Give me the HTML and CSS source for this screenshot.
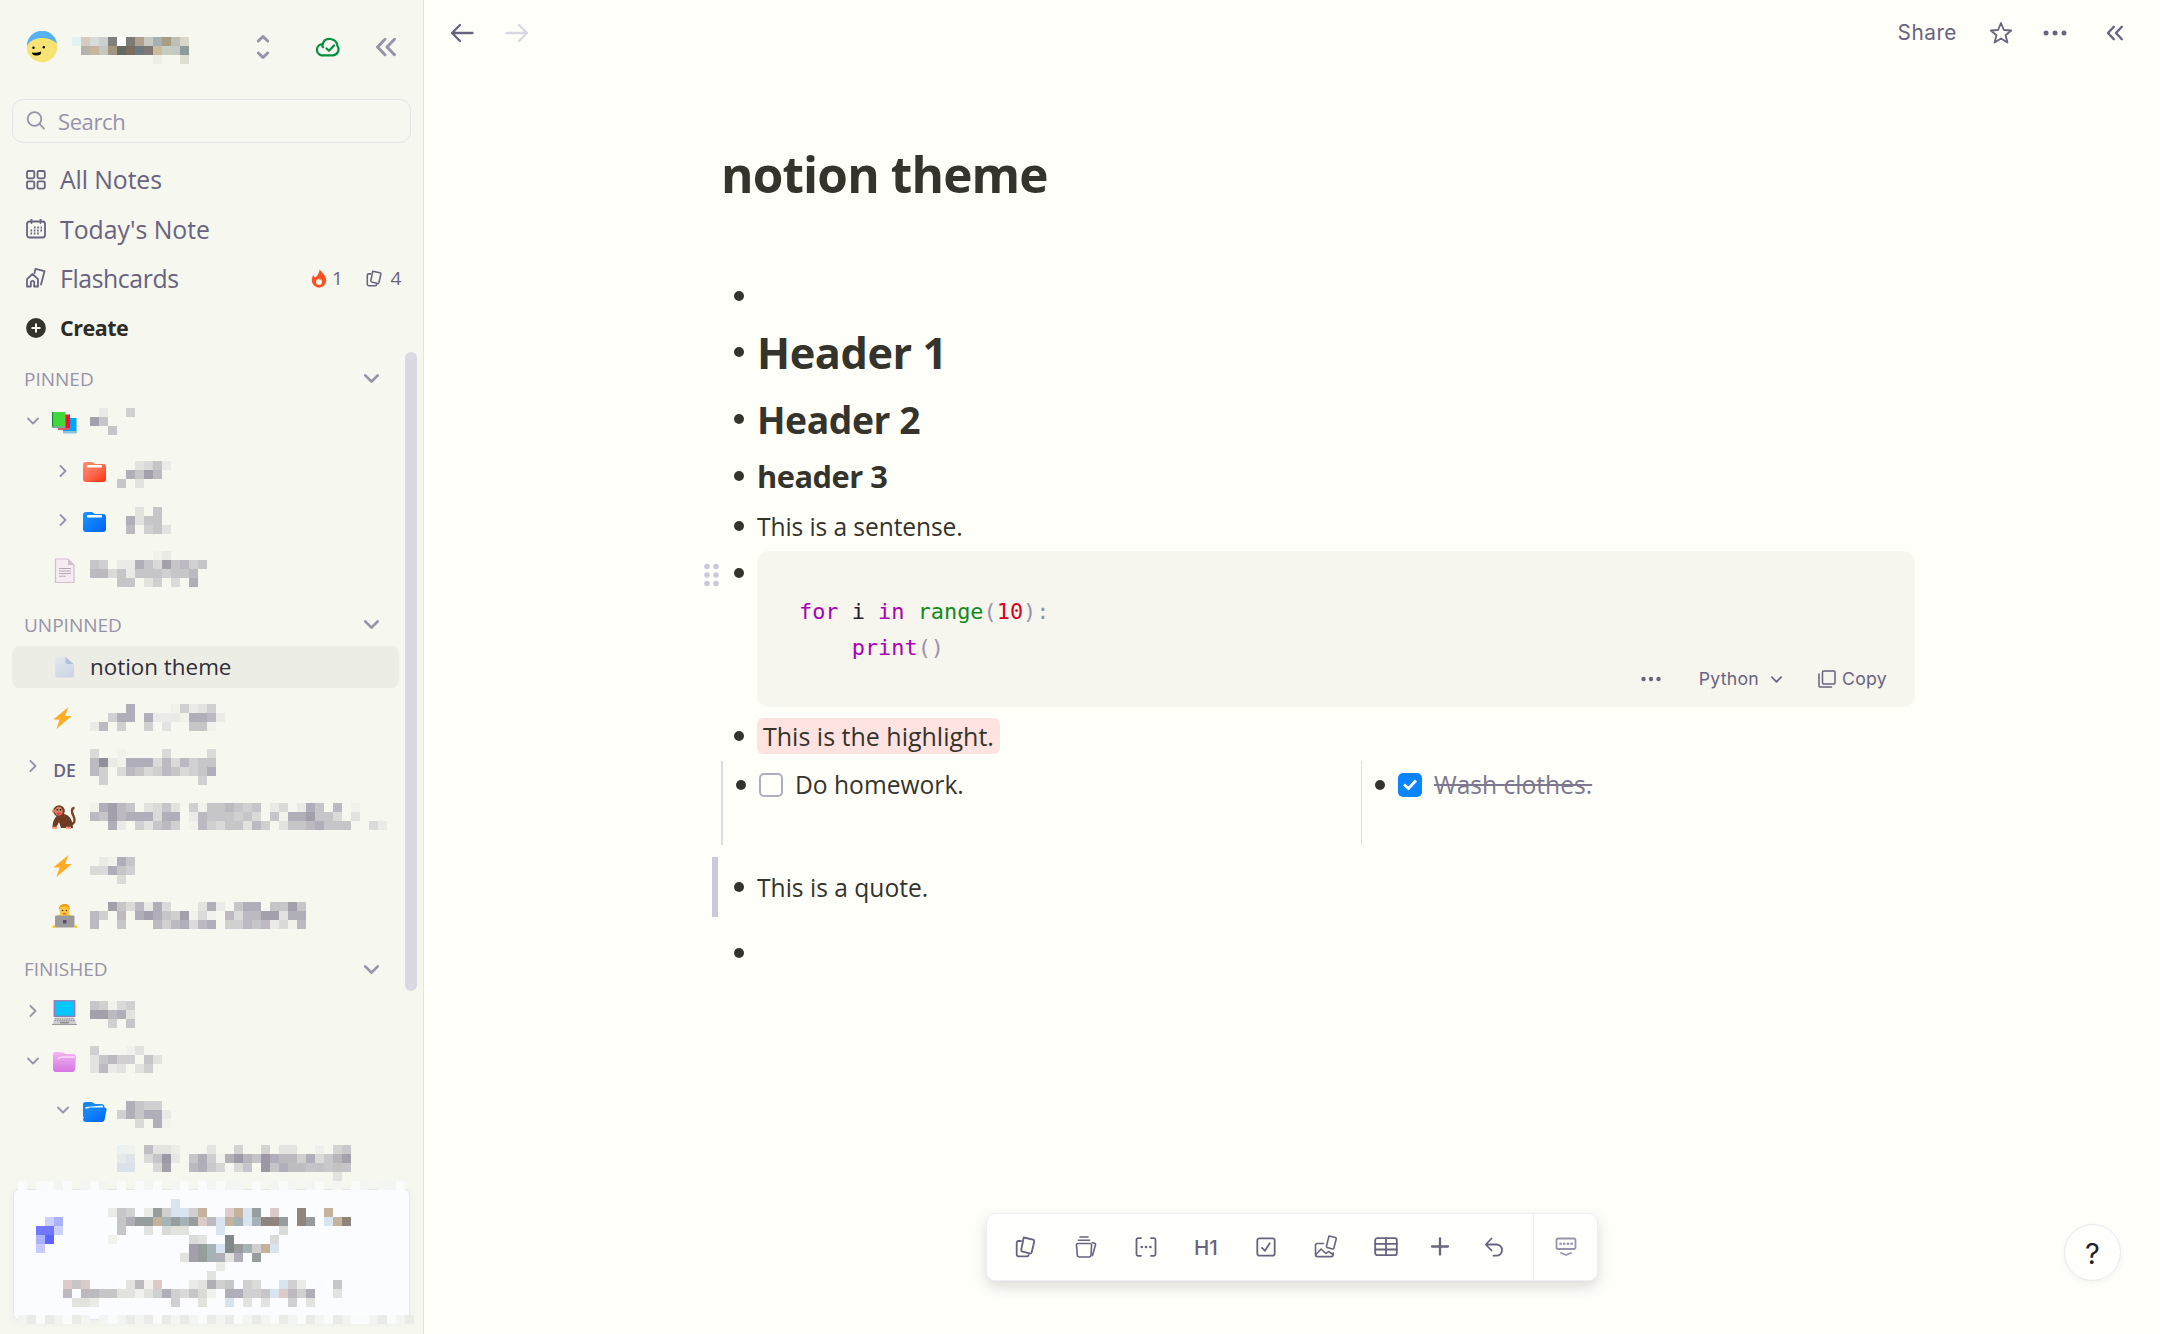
FILE: index.html
```html
<!DOCTYPE html>
<html lang="en">
<head>
<meta charset="utf-8">
<title>notion theme</title>
<link rel="stylesheet" href="styles.css">
</head>
<body>
<svg class="defs" width="0" height="0">
  <defs>
    <linearGradient id="gRed" x1="0" y1="0" x2="1" y2="1"><stop offset="0" stop-color="#ff8d78"/><stop offset=".5" stop-color="#ff6a50"/><stop offset="1" stop-color="#ff2f0a"/></linearGradient>
    <linearGradient id="gBlue" x1="0" y1="0" x2="1" y2="1"><stop offset="0" stop-color="#1a97ff"/><stop offset="1" stop-color="#0062f5"/></linearGradient>
    <linearGradient id="gPink" x1="0" y1="0" x2="0" y2="1"><stop offset="0" stop-color="#f3b5f2"/><stop offset="1" stop-color="#d476e0"/></linearGradient>
    <linearGradient id="gDoc" x1="0" y1="0" x2="0.6" y2="1"><stop offset="0" stop-color="#e6ebf0"/><stop offset="1" stop-color="#cdd4e4"/></linearGradient>
    <symbol id="down" viewBox="0 0 12 12"><path d="M1 3.5l5 5 5-5"/></symbol>
    <symbol id="right" viewBox="0 0 12 12"><path d="M3.5 1l5 5-5 5"/></symbol>
    <symbol id="bolt" viewBox="0 0 19 22"><path d="M15.5 0L.3 12.5h6.4L3.4 22 18.700 9H12z" fill="#ffab24"/></symbol>
    <symbol id="cards" viewBox="0 0 22 22"><path d="M8.700 1.500l9.300 2.200a1.700 1.700 0 0 1 1.200 2l-2.500 10.500a1.700 1.700 0 0 1-2 1.200l-7.200-1.800a1.700 1.700 0 0 1-1.200-2L8.700 1.500z"/><path d="M6 5H3.500A1.800 1.800 0 0 0 1.700 6.800v11.700a1.800 1.800 0 0 0 1.800 1.800h8.500a1.800 1.800 0 0 0 1.700-1.300"/></symbol>
  </defs>
</svg>
<div class="app">
  <aside class="sidebar">
    <header class="account">
      <svg class="avatar" width="32" height="32" viewBox="0 0 32 32"><circle cx="16" cy="16" r="15.200" fill="#f7e374"/><path d="M.8 15A15.200 15.200 0 0 1 31 12.500C23 4.500 6 5 .8 15z" fill="#55b1fc"/><circle cx="7.500" cy="16.800" r="1.200"/><circle cx="17.800" cy="16.200" r="1.200"/><path d="M6 21.500c3 .6 6 .2 9-1 .5 3-1.500 4-4.500 4S6 23.500 6 21.500z"/></svg>
      <svg class="mosaic name" data-w="13" data-h="3" data-hex="e2f2f1 d6cbbf d9dbda cbcfcf 80817a fdfdfb 7a7a76 b0a28b c7cac4 a5adb5 a99d80 bcc0b9 dad6ca/. b6b1ab c6b69d c5c8c1 a3967e 636a64 7b6c60 6e797f 7f7776 cabb9f c5ccc0 c4c9c4 8e9b9b/. . . . . . . . . edeee8 . . e0ddd1"></svg>
      <svg class="line mute thick updown" width="14" height="26" viewBox="0 0 14 26"><path d="M2.300 7l4.700-4.500L11.700 7M2.300 19l4.700 4.500 4.700-4.500"/></svg>
      <svg class="line cloud" width="26" height="20" viewBox="0 0 26 20"><path d="M7.500 18.300h11a6 6 0 0 0 5-9.300c-.5-4-3-6.500-7-7-4-.4-7 1.800-7.800 5.200A5.600 5.600 0 0 0 7.500 18.300zM8.700 7.200c-.4 1.200-.3 2.200.2 3"/><path d="M12.500 11.500l2.500 2.300 5-5.300"/></svg>
      <svg class="line mute thick collapse" width="22" height="20" viewBox="0 0 22 20"><path d="M10 2.300L2.500 10l7.500 7.700M19.500 2.300L12 10l7.500 7.700"/></svg>
    </header>
    <div class="search"><svg class="line mute" width="20" height="20" viewBox="0 0 20 20"><circle cx="8.500" cy="8" r="6.800"/><path d="M13.500 13l4.500 4.700"/></svg><span>Search</span></div>
    <nav class="nav">
      <div class="nav-item"><svg class="line" width="20" height="20" viewBox="0 0 20 20"><rect x="1" y="1" width="7.300" height="7.300" rx="1.500"/><rect x="11.500" y="1" width="7.300" height="7.300" rx="1.500"/><rect x="1" y="11.300" width="7.300" height="7.300" rx="1.500"/><rect x="11.500" y="11.300" width="7.300" height="7.300" rx="1.500"/></svg><span>All Notes</span></div>
      <div class="nav-item today"><svg class="line" width="20" height="20" viewBox="0 0 20 20"><rect x="1" y="2.500" width="18" height="16" rx="2.500"/><path d="M5.500 0v4M14.500 0v4"/><path d="M8 8.500h8M4.500 11.500h12M4.500 14.500h8.500" stroke-dasharray="1.600 1.700" stroke-linecap="butt"/></svg><span>Today's Note</span></div>
      <div class="nav-item cards-item"><svg class="line" width="20" height="20" viewBox="0 0 20 20"><path d="M1 18.500v-7.300L6.500 6 12 11.200v7.300H8.200v-4a1.700 1.700 0 0 0-3.400 0v4z"/><path d="M8.500 5L9.500.9 18.500 3.200 15 16.500"/></svg><span>Flashcards</span>
        <span class="stats"><svg width="16" height="19" viewBox="0 0 16 19"><path d="M8.700 0c.8 3.200 6.500 5.500 6.500 11.500A7.200 7.200 0 0 1 8 18.700 7.200 7.200 0 0 1 .8 11.500c0-2.800 1-4.700 1.700-5.500.4 1.400 1 2.200 2 2.500C6.800 6.500 8.500 3.500 8.700 0zM8 9.500c-1.500.8-3 1.700-3 3.500a3 3 0 0 0 6 0c0-1.300-.5-2.200-1-3-.3.700-1 1.200-1.500 1.200.2-.7 0-1.300-.5-1.700z" fill="#ff5023" fill-rule="evenodd"/></svg><b>1</b><svg class="line cards" width="17" height="17"><use href="#cards"/></svg><b>4</b></span></div>
      <div class="nav-item create"><svg width="20" height="20" viewBox="0 0 20 20"><circle cx="10" cy="10" r="9.900" fill="#35342c"/><path d="M10 5.500v9M5.500 10h9" stroke="#f6f7ef" stroke-width="2"/></svg><span>Create</span></div>
    </nav>
    <div class="scroller">
      <div class="tree">
        <div class="group first"><span>PINNED</span><svg class="line mute thick" width="15" height="15"><use href="#down"/></svg></div>
        <div class="row"><span class="chev"><svg class="line mute" width="12" height="12"><use href="#down"/></svg></span>
          <span class="ico"><svg width="25" height="25" viewBox="0 0 25 25"><rect x="11" y="8" width="13.500" height="15" fill="#00a4ff"/><rect x="11" y="21" width="13.500" height="2.500" fill="#8cc4de"/><rect x="6" y="4.500" width="12" height="14" fill="#ff0a28"/><rect x="6" y="18" width="12" height="2" fill="#cf5a72"/><rect x=".5" y="2" width="13" height="14" fill="#3fd93c"/><path d="M.5 2v15.500" stroke="#13803c" stroke-width="1.200"/><rect x=".5" y="16" width="13" height="2" fill="#6faf8a"/></svg></span>
          <svg class="mosaic" data-w="5" data-y="10.500" data-g=".1..4/85/..5"></svg></div>
        <div class="row deep"><span class="chev"><svg class="line mute" width="12" height="12"><use href="#right"/></svg></span>
          <span class="ico"><svg width="25" height="22" viewBox="0 0 25 22"><path d="M1 4a3 3 0 0 1 3-3h6l3 2h8a3 3 0 0 1 3 3v12a3 3 0 0 1-3 3H4a3 3 0 0 1-3-3z" fill="url(#gRed)"/><rect x="5" y="4" width="15" height="2.500" rx=".8" fill="#fff"/></svg></span>
          <svg class="mosaic" data-w="6" data-y="14.500" data-g="..2351/.7586/5.2"></svg></div>
        <div class="row deep"><span class="chev"><svg class="line mute" width="12" height="12"><use href="#right"/></svg></span>
          <span class="ico"><svg width="25" height="22" viewBox="0 0 25 22"><path d="M1 4a3 3 0 0 1 3-3h6l3 2h8a3 3 0 0 1 3 3v12a3 3 0 0 1-3 3H4a3 3 0 0 1-3-3z" fill="url(#gBlue)"/><rect x="5" y="4" width="15" height="2.500" rx=".8" fill="#fff"/></svg></span>
          <svg class="mosaic" data-w="6" data-y="10.500" data-g="..2.5/.7255/.6.452"></svg></div>
        <div class="row"><span class="chev"></span>
          <span class="ico"><svg width="25" height="26" viewBox="0 0 25 26"><path d="M3.500 1h12.500l6 6v17.500h-18.500z" fill="#f7ebf3" stroke="#cfbecb" stroke-width="1.200"/><path d="M16 1v6h6z" fill="#cfbecb"/><path d="M7 10.500h12M7 13h12M7 15.500h12M7 18.200h7" stroke="#b5a5b3" stroke-width="1"/></svg></span>
          <svg class="mosaic" data-w="12" data-y="6" data-g=".......01/54.1175385645/663515554556/...55.24.3.7"></svg></div>

        <div class="group"><span>UNPINNED</span><svg class="line mute thick" width="15" height="15"><use href="#down"/></svg></div>
        <div class="row active"><span class="chev"></span>
          <span class="ico"><svg width="25" height="22" viewBox="0 0 25 22"><path d="M3 .5h10l9 8V19a2.500 2.500 0 0 1-2.500 2.500h-14A2.500 2.500 0 0 1 3 19z" fill="url(#gDoc)"/><path d="M13.500 1l8 7h-6a2 2 0 0 1-2-2z" fill="#aec2dd"/></svg></span>
          <span class="label">notion theme</span></div>
        <div class="row"><span class="chev"></span><span class="ico"><svg class="shift" width="19" height="22"><use href="#bolt"/></svg></span>
          <svg class="mosaic" data-w="15" data-y="12" data-g="....7....04124/..477.711107761/16.4..4.2..550"></svg></div>
        <div class="row"><span class="chev"><svg class="line mute" width="12" height="12"><use href="#right"/></svg></span><span class="ico initials">DE</span>
          <svg class="mosaic" data-w="14" data-y="8" data-g="3..0....3....3/69107773636455/64.36534653457/.4..........4."></svg></div>
        <div class="row"><span class="chev"></span>
          <span class="ico"><svg width="25" height="24" viewBox="0 0 25 24"><path d="M17 19c6 1 6.500-4 4.500-8-2-3.500-2.500-8 1-8" fill="none" stroke="#7b4426" stroke-width="2.400"/><path d="M8 9c6-1 13 3 13 14H9l-2-6-3 6H.5C.5 16 3 11 8 9z" fill="#6f3b22"/><circle cx="7" cy="6" r="5.800" fill="#6f3b22"/><circle cx="1.800" cy="6" r="1.800" fill="#d58563"/><ellipse cx="6.800" cy="6.200" rx="4" ry="4.400" fill="#d58563"/><circle cx="5.300" cy="4.800" r=".8"/><circle cx="8.500" cy="4.800" r=".8"/><rect x="4.800" y="7.500" width="4" height="2" rx="1" fill="#ff2951"/><path d="M.5 21.800h4.500V24H.5zM14 21.800h5V24h-5z" fill="#ff9f85"/></svg></span>
          <svg class="mosaic" data-w="33" data-y="12" data-g="07865.2352.40556545.13.175.6.0/6586777377.16555453.50778553.2/..71.42564.064355264.25567555..31"></svg></div>
        <div class="row"><span class="chev"></span><span class="ico"><svg class="shift" width="19" height="22"><use href="#bolt"/></svg></span>
          <svg class="mosaic" data-w="5" data-y="16.500" data-g=".1075/33754/...3"></svg></div>
        <div class="row"><span class="chev"></span>
          <span class="ico"><svg width="25" height="25" viewBox="0 0 25 25"><path d="M4 16c0-4 4-5 8.500-5s8.500 1 8.500 5v5H4z" fill="#ffc400"/><ellipse cx="12.500" cy="7.500" rx="5" ry="6.500" fill="#ffc83a"/><path d="M7 7c-1-8 12-8 11 0-1-3-3-3.500-5.500-3.500S8 4 7 7z" fill="#ee9d12"/><circle cx="10.500" cy="7.500" r=".8" fill="#4a3410"/><circle cx="14.500" cy="7.500" r=".8" fill="#4a3410"/><path d="M10.800 10.800h3.400" stroke="#e2304c"/><rect x="3" y="12.500" width="19.500" height="12" rx="1" fill="#9b9b9b"/><rect x="11" y="17" width="3.500" height="3.500" fill="#5e4a70"/><path d="M.5 22.500H3v2.300H.5zM22.500 22.500H25v2.300h-2.500z" fill="#ffc400"/></svg></span>
          <svg class="mosaic" data-w="24" data-y="12" data-g="..8536173...271.577.5585/64.6.787548030.636688277/6..5...6467367.446561306"></svg></div>

        <div class="group"><span>FINISHED</span><svg class="line mute thick" width="15" height="15"><use href="#down"/></svg></div>
        <div class="row"><span class="chev"><svg class="line mute" width="12" height="12"><use href="#right"/></svg></span>
          <span class="ico"><svg width="25" height="25" viewBox="0 0 25 25"><rect x="2.300" y=".8" width="20.400" height="15.500" fill="#00c8ff" stroke="#8f7cba" stroke-width="1.400"/><path d="M2.500 17.500h20l2 7H.5z" fill="#cfcfcf"/><path d="M3 18.800h19M2.500 20.500h20" stroke="#999" stroke-dasharray="1.500 .8"/><rect x="8" y="21.800" width="9" height="1.600" fill="#888"/><path d="M0 24.500h25" stroke="#9a9a9a"/></svg></span>
          <svg class="mosaic" data-w="5" data-y="14" data-g="54034/88672/..4.5"></svg></div>
        <div class="row"><span class="chev"><svg class="line mute" width="12" height="12"><use href="#down"/></svg></span>
          <span class="ico"><svg width="25" height="22" viewBox="0 0 25 22"><path d="M1 3a2.500 2.500 0 0 1 3-2l7 .5 2.500 1.500H21a3 3 0 0 1 3 3.500l-1 12A3 3 0 0 1 20 21H4a3 3 0 0 1-3-3z" fill="url(#gPink)"/><path d="M6 8c1-2 2.500-2 5-2h12" stroke="#fbdcfb" stroke-width="1.500" fill="none"/></svg></span>
          <svg class="mosaic" data-w="8" data-y="9.500" data-g="4...02/25644.52/2612.24"></svg></div>
        <div class="row deep"><span class="chev"><svg class="line mute" width="12" height="12"><use href="#down"/></svg></span>
          <span class="ico"><svg width="25" height="22" viewBox="0 0 25 22"><path d="M1 3a2.500 2.500 0 0 1 3-2h6l3 2h7a3 3 0 0 1 2.500 3v10H1z" fill="#1588e8"/><path d="M3.500 6l17-1.500 1 3H3z" fill="#e8f6ff"/><path d="M5.500 8.500c.5-1.500 1.500-2 3-2h14a2 2 0 0 1 2 2.500L22.500 19a3 3 0 0 1-3 2H4a3 3 0 0 1-3-3z" fill="url(#gBlue)"/></svg></span>
          <svg class="mosaic" data-w="6" data-y="14.500" data-g=".7544/475771/..3.70"></svg></div>
        <div class="row deepest">
          <svg class="mosaic" data-w="27" data-y="10" data-hex=". ecf1f1 eff2ef . c0bec3 e3e4e0 e3e4e0 ebede7 . . . e3e4e0 . . d3d3d2 . . d3d3d2 . e3e4e0 e3e4e0 . . eef0eb . d3d3d2 c9c8ca/. e4e9eb e0e4e8 . dadad8 c5c4c8 9c98a5 e6e7e3 . c6c5c9 b0aeb8 cfcfcf f0f1ec b4b1bb 9e9aa7 b8b6bc c5c5c7 9c98a5 b0aeb8 bcbabf bcbabf d0d0d0 b0aeb8 dadad8 c9c8ca b8b6bc a5a1ad/. dce0e8 dce0e8 . . d8d7d6 a3a0ac . . bcbac0 b0aeb8 c9c8ca d6d6d4 . dadad8 c6c5c9 . 9c98a5 c5c4c8 b0aeb8 bebdc0 bebdc0 c5c4c8 c3c2c5 c9c8ca c3c2c5 c6c5c9/. . . . . . . . . . . . . . . . . . . . . . . . . e2e2df ."></svg></div>
      </div>
      <span class="thumb"></span>
    </div>
    <div class="promo">
      <svg class="mosaic edge top" data-w="44" data-h="1" data-g="w.wwxw.xwx.w.wxw.xw.wxwxx.w.xwx.xw.x.wx.xxw"></svg>
      <svg class="mosaic edge bottom" data-w="44" data-h="1" data-g="x1w1xw1x.xwx1x1w1x1xw1x1wx1xw1xw1xw1xwwx1wx1"></svg>
      <svg class="mosaic logo" data-w="3" data-h="4" data-hex=". ccd0ff abb0ff/6f78ff 6f78ff ccd0ff/abb0ff 5c66ff ./c6caff . ."></svg>
      <svg class="mosaic lines" data-w="34" data-h="12" data-g="............l/.....154.1g4ll4t..ptlg.p..b..t/......57ggtsgsgp6ltslsbbg.bg.ltb/......5..2.322...l......3/.....0........32..G....3/..............8gslGgs4tl/.............28gs727.g/.................1/................2/p5p....260p...12745.43..l41...5/6.665522024743530.77445lp647..2/.221........4..2..l.2.2..4.2"></svg>
    </div>
  </aside>

  <main class="main">
    <header class="topbar">
      <svg class="line arrow" width="24" height="20" viewBox="0 0 24 20"><path d="M22.500 10H2M10 2L2 10l8 8"/></svg>
      <svg class="line arrow off" width="24" height="20" viewBox="0 0 24 20"><path d="M1.500 10H22M14 2l8 8-8 8"/></svg>
      <span class="share">Share</span>
      <svg class="line star" width="24" height="24" viewBox="0 0 24 24"><path d="M12 2l2.900 7 7.300.5-5.600 4.700 1.800 7.300-6.400-4-6.400 4 1.800-7.300L1.800 9.500 9.100 9z"/></svg>
      <svg class="dots" width="24" height="8" viewBox="0 0 24 8"><circle cx="3" cy="4" r="2.500"/><circle cx="12" cy="4" r="2.500"/><circle cx="21" cy="4" r="2.500"/></svg>
      <svg class="line fold" width="18" height="16" viewBox="0 0 18 16"><path d="M7.800 1.800L2 8l5.800 6.200M15.800 1.800L10 8l5.800 6.200"/></svg>
    </header>

    <article class="editor">
      <h1 class="title">notion theme</h1>
      <div class="block empty"><i class="bullet"></i></div>
      <div class="block h1"><i class="bullet"></i><span>Header 1</span></div>
      <div class="block h2"><i class="bullet"></i><span>Header 2</span></div>
      <div class="block h3"><i class="bullet"></i><span>header 3</span></div>
      <div class="block sentence"><i class="bullet"></i><span>This is a sentense.</span></div>
      <div class="block codeblock">
        <svg class="grip" width="16" height="24" viewBox="0 0 16 24"><circle cx="3" cy="3.500" r="2.800"/><circle cx="12" cy="3.500" r="2.800"/><circle cx="3" cy="12" r="2.800"/><circle cx="12" cy="12" r="2.800"/><circle cx="3" cy="20.500" r="2.800"/><circle cx="12" cy="20.500" r="2.800"/></svg>
        <i class="bullet"></i>
        <div class="code">
<pre><span class="k">for</span> i <span class="k">in</span> <span class="f">range</span><span class="p">(</span><span class="n">10</span><span class="p">):</span>
    <span class="k">print</span><span class="p">()</span></pre>
          <div class="code-tools">
            <svg class="dots" width="20" height="6" viewBox="0 0 20 6"><circle cx="2.500" cy="3" r="2.200"/><circle cx="10" cy="3" r="2.200"/><circle cx="17.500" cy="3" r="2.200"/></svg>
            <span class="lang">Python</span>
            <svg class="line" width="11" height="11"><use href="#down"/></svg>
            <svg class="line copy-icon" width="18" height="18" viewBox="0 0 18 18"><rect x="4.500" y="1" width="12.500" height="13" rx="1"/><path d="M1 4v12a1 1 0 0 0 1 1h11.500"/></svg>
            <span>Copy</span>
          </div>
        </div>
      </div>
      <div class="block marked"><i class="bullet"></i><mark>This is the highlight.</mark></div>
      <div class="columns">
        <div class="col"><i class="bullet"></i><span class="box"></span><span>Do homework.</span></div>
        <div class="col"><i class="bullet"></i><span class="box on"><svg width="24" height="24" viewBox="0 0 24 24"><path d="M6 11.500l4.500 4L18 7.500"/></svg></span><span class="done">Wash clothes.</span></div>
      </div>
      <div class="block quote"><i class="bullet"></i><span>This is a quote.</span></div>
      <div class="block empty"><i class="bullet"></i></div>
    </article>

    <div class="toolbar">
      <span class="tool"><svg class="line" width="22" height="22"><use href="#cards"/></svg></span>
      <span class="tool"><svg class="line thin" width="22" height="22" viewBox="0 0 22 22"><path d="M5 1h8M3.500 4.200h11"/><path d="M3 7.500h12a1.600 1.600 0 0 1 1.600 1.800l-.6 9.700a2.200 2.200 0 0 1-2.200 2H4.500a2.200 2.200 0 0 1-2.200-2L1.500 9.300A1.600 1.600 0 0 1 3 7.500z"/><path d="M17.300 6.500l2.400.8a1.200 1.200 0 0 1 .8 1.500l-3 10.700"/></svg></span>
      <span class="tool"><svg class="line" width="22" height="20" viewBox="0 0 22 20"><path d="M6 1.200H3.200A1.700 1.700 0 0 0 1.500 3v14a1.700 1.700 0 0 0 1.700 1.800H6M16 1.200h2.800A1.700 1.700 0 0 1 20.500 3v14a1.700 1.700 0 0 1-1.700 1.800H16"/><path d="M6.700 10h.1M11 10h.1M15.300 10h.1" stroke-width="2.600"/></svg></span>
      <span class="tool heading">H1</span>
      <span class="tool"><svg class="line" width="20" height="20" viewBox="0 0 20 20"><rect x="1.300" y="1.300" width="17.400" height="17.400" rx="2.200"/><path d="M6 10.800l3 3 4.700-7.500"/></svg></span>
      <span class="tool"><svg class="line thin" width="24" height="24" viewBox="0 0 24 24"><path d="M9.500 8.500H3.300A1.800 1.800 0 0 0 1.500 10.300v9.500A1.800 1.800 0 0 0 3.300 21.600h14a1.800 1.800 0 0 0 1.800-1.800v-2"/><path d="M2 19.500l5-5.500 5 4.500 2.500-2 4.500 3.200"/><path d="M15 1l6.300 1.500a1.200 1.200 0 0 1 .9 1.500l-2.300 9a1.200 1.200 0 0 1-1.500.9l-5-1.300a1.200 1.200 0 0 1-.9-1.500l2.200-9z"/></svg></span>
      <span class="tool"><svg class="line" width="24" height="20" viewBox="0 0 24 20"><rect x="1.200" y="1.200" width="21.600" height="17" rx="2"/><path d="M1.200 6.900h21.600M1.200 12.500h21.600M12 1.200v17"/></svg></span>
      <span class="tool narrow"><svg class="line bold" width="20" height="20" viewBox="0 0 20 20"><path d="M10 1.500v16M2 9.500h16"/></svg></span>
      <span class="tool narrow"><svg class="line" width="20" height="20" viewBox="0 0 20 20"><path d="M7.500 1.500L1.800 7.500l5.700 6M2 7.500h10.500a5.600 5.600 0 0 1 0 11.200h-3"/></svg></span>
      <span class="tool hide"><svg class="line mute" width="22" height="20" viewBox="0 0 22 20"><rect x="1.500" y="1.500" width="19" height="10.500" rx="1.800"/><path d="M5.500 6.800h.1M9.200 6.800h.1M12.900 6.800h.1M16.600 6.800h.1" stroke-width="2.600"/><path d="M6 16l5 2 5-2"/></svg></span>
    </div>
    <div class="help">?</div>
  </main>
</div>
<script src="mosaic.js"></script>
</body>
</html>
```
FILE: mosaic.js
```javascript
// Paints the redacted labels as grids of 9px cells, one character (or hex value) per cell.
const CELL = 9;
const TONES = {
  0: '#f1f2ec', 1: '#eaebe6', 2: '#e2e2df', 3: '#dadad8', 4: '#d0d0d0',
  5: '#c6c5c8', 6: '#bcbac0', 7: '#b0aeb8', 8: '#a3a0ac', 9: '#908d9d',
  w: '#fafbfb', x: '#f3f5f2', t: '#c5b29d', b: '#8f857c', g: '#969d9c',
  G: '#828a89', s: '#a7b2b6', l: '#d8e5f1', p: '#dccbc9', i: '#edf5fb'
};
document.querySelectorAll('svg.mosaic').forEach(svg => {
  const { w, h, y = 0, g, hex } = svg.dataset;
  const rows = hex
    ? hex.split('/').map(r => r.split(' ').map(c => (c === '.' ? null : '#' + c)))
    : g.split('/').map(r => [...r].map(c => TONES[c]));
  svg.setAttribute('width', w * CELL);
  svg.setAttribute('height', h ? h * CELL : 49);
  rows.forEach((row, j) => row.forEach((fill, i) => {
    if (!fill) return;
    const cell = document.createElementNS('http://www.w3.org/2000/svg', 'rect');
    cell.setAttribute('x', i * CELL);
    cell.setAttribute('y', Number(y) + j * CELL);
    cell.setAttribute('width', CELL);
    cell.setAttribute('height', CELL);
    cell.setAttribute('fill', fill);
    svg.appendChild(cell);
  }));
});
```
FILE: styles.css
```css
* { box-sizing: border-box; }
body {
  margin: 0;
  background: #fffffa;
  color: #35342c;
  font-family: "Open Sans", "Noto Sans", sans-serif;
  overflow: hidden;
}
svg { display: block; flex: none; }
.defs { position: absolute; }
.app { display: flex; height: 1334px; }

.line { fill: none; stroke: #68637f; stroke-width: 1.8; stroke-linecap: round; stroke-linejoin: round; }
.mute { stroke: #9793ab; }
.thick { stroke-width: 3; }
.thin { stroke-width: 1.6; }
.bold { stroke-width: 2.3; }
.mosaic { shape-rendering: crispEdges; overflow: visible; }

/* Sidebar */
.sidebar {
  position: relative;
  flex: none;
  display: flex;
  flex-direction: column;
  width: 424px;
  background: #f6f7ef;
  border-right: 1px solid #e4e3ea;
}
.account { display: flex; align-items: center; height: 94px; padding-left: 26px; flex: none; }
.name { margin: 7px 0 0 14px; }
.updown { margin-left: 67px; }
.cloud { stroke: #00913c; stroke-width: 2.2; margin-left: 44px; }
.collapse { margin-left: 35px; stroke-width: 3; }
.search {
  display: flex;
  align-items: center;
  gap: 12px;
  flex: none;
  height: 44px;
  margin: 5px 12px 0;
  padding-left: 13px;
  border: 1px solid #e4e4ea;
  border-radius: 11px;
  color: #9793a9;
  font-size: 22px;
  letter-spacing: -.4px;
}
.nav { flex: none; padding-top: 12px; height: 209px; }
.nav-item {
  display: flex;
  align-items: center;
  height: 49.400px;
  padding: 0 22px 0 26px;
  gap: 14px;
  color: #68637f;
  font-size: 24.800px;
  letter-spacing: -.1px;
}
.today { letter-spacing: 0; }
.cards-item { letter-spacing: -.4px; }
.nav-item > svg { width: 20px; }
.nav-item.create { color: #2d2c27; font-size: 21.500px; font-weight: 700; letter-spacing: -.5px; }
.nav-item > span { line-height: 49px; }
.stats { display: flex; align-items: center; margin-left: auto; font-size: 19px; }
.stats b { font-weight: 400; margin-left: 5px; line-height: 48px; padding-bottom: 1px; }
.cards { margin-left: 23px; stroke-width: 2; }
.stats .cards + b { margin-left: 8px; }

.scroller { display: flex; flex: 1; overflow: hidden; }
.tree { width: 399px; flex: none; }
.thumb { width: 12px; height: 639px; margin-left: 6px; border-radius: 6px; background: #dad8e3; }
.group {
  display: flex;
  justify-content: space-between;
  align-items: center;
  height: 47.500px;
  padding: 13px 20px 0 24px;
  color: #9793a9;
  font-size: 19px;
}
.group.first { height: 44.500px; padding-top: 9px; }
.group .line { stroke-width: 2.200; }
.row { display: flex; height: 49.500px; padding-left: 27px; align-items: flex-start; }
.row.deep { padding-left: 57px; }
.row.deep .mosaic { margin-left: -3px; }
.row.deepest { padding-left: 108px; }
.chev { display: flex; align-items: center; width: 25px; height: 49px; }
.ico { display: flex; align-items: center; justify-content: center; width: 25px; height: 52px; margin-right: 13px; }
.shift { margin-left: -5px; }
.initials { color: #68637f; font-size: 17.500px; font-weight: 600; padding-top: 5px; }
.row.active {
  height: 42px;
  margin: 3.500px 0 4px 12px;
  padding-left: 15px;
  align-items: center;
  border-radius: 8px;
  background: #eceee6;
}
.row.active .ico { height: 42px; }
.label { color: #2f2d38; font-size: 22.400px; line-height: 40px; }

.promo {
  position: absolute;
  left: 13px;
  top: 1189px;
  width: 397px;
  height: 131px;
  border: 1px solid #e5e7ec;
  border-radius: 6px;
  background: #fbfcff;
  box-shadow: 0 2px 8px rgba(60, 60, 80, .06);
}
.promo .mosaic { position: absolute; }
.edge { left: 4px; }
.edge.top { top: -9px; }
.edge.bottom { bottom: -5px; }
.logo { left: 22px; top: 27px; }
.lines { left: 49px; top: 9px; }

/* Top bar */
.main { position: relative; flex: 1; }
.topbar { display: flex; align-items: center; height: 66px; padding-left: 26px; padding-right: 36px; }
.arrow { stroke-width: 2.300; }
.arrow.off { stroke: #d9d8e1; margin-left: 31px; }
.share {
  margin-left: auto;
  color: #68637f;
  font: 400 20.800px/24px Inter, sans-serif;
  letter-spacing: .5px;
}
.star { margin-left: 32px; }
.dots { fill: #68637f; }
.star + .dots { margin-left: 30px; }
.fold { margin-left: 39px; stroke-width: 2.400; }

/* Document */
.editor { padding: 63px 0 0 297px; width: 1491px; font-size: 24.600px; }
.title { margin: 0 0 52px; height: 91px; line-height: 91px; font-size: 49.500px; font-weight: 700; letter-spacing: -.85px; }
.block { display: flex; align-items: center; padding-left: 13px; position: relative; }
.bullet { flex: none; width: 10px; height: 10px; margin-right: 13px; border-radius: 50%; background: #35342c; }
.empty { height: 48px; }
.h1, .h2, .h3 { font-weight: 700; }
.h1 { height: 64px; font-size: 43.300px; letter-spacing: -.45px; }
.h2 { height: 70px; font-size: 37.300px; letter-spacing: -.45px; }
.h3 { height: 44px; font-size: 30.800px; letter-spacing: -.5px; }
.sentence { height: 53px; padding-top: 3px; letter-spacing: -.1px; }
.codeblock { align-items: flex-start; }
.codeblock .bullet { margin-top: 17px; }
.grip { position: absolute; left: -17px; top: 12px; fill: #cbc9d9; }
.code {
  display: flex;
  flex-direction: column;
  justify-content: space-between;
  flex: 1;
  height: 156px;
  padding: 43px 28px 16px 42px;
  border-radius: 12px;
  background: #f6f5ee;
}
.code pre { margin: 0; font: 21.900px/36px "DejaVu Sans Mono", monospace; color: #22212b; }
.k { color: #ab00b8; }
.f { color: #138a1c; }
.n { color: #d8001f; }
.p { color: #9793a9; }
.code-tools {
  display: flex;
  align-items: center;
  justify-content: flex-end;
  height: 24px;
  color: #68637f;
  font: 400 17.700px/24px Inter, sans-serif;
  letter-spacing: .25px;
}
.lang { margin: 0 12px 0 38px; }
.copy-icon { margin: 0 6px 0 36px; stroke-width: 1.500; }
.marked { height: 54px; padding-top: 4px; }
.marked mark { padding: 0 6px; border-radius: 6px; background: #ffe3e1; color: inherit; line-height: 36px; font-size: 25px; }
.columns { display: grid; grid-template-columns: 640px 1fr; height: 84px; }
.col { display: flex; align-items: center; height: 84px; padding: 0 0 37px 13px; border-left: 2px solid #dddce0; }
.col + .col { border-left-width: 1px; padding-left: 13px; }
.box { width: 24px; height: 24px; border: 2px solid #b0adc0; border-radius: 5px; margin-right: 12px; }
.box.on { border: 0; background: #0a84ff; }
.box path { fill: none; stroke: #fff; stroke-width: 2.800; }
.done { color: #7d7890; text-decoration: line-through; text-decoration-thickness: 2px; }
.quote { height: 60px; margin: 12px 0 12px -9px; padding-left: 16px; border-left: 6px solid #cbc9d9; }

/* Floating controls */
.toolbar {
  position: absolute;
  left: 562px;
  top: 1213px;
  display: flex;
  align-items: center;
  width: 612px;
  height: 68px;
  padding-left: 9px;
  border: 1px solid #eeedf2;
  border-radius: 9px;
  background: #fffffc;
  box-shadow: 0 6px 14px rgba(40, 38, 55, .17);
}
.tool { display: flex; align-items: center; justify-content: center; width: 60px; height: 66px; flex: none; }
.tool.narrow { width: 54px; }
.tool.narrow:nth-child(8) { margin-left: -3px; }
.heading { color: #68637f; font: 500 20.500px Inter, sans-serif; }
.tool.hide { flex: 1; margin-left: 12px; border-left: 1px solid #eeedf2; }
.help {
  position: absolute;
  left: 1640px;
  top: 1224px;
  display: flex;
  align-items: center;
  justify-content: center;
  width: 57px;
  height: 57px;
  padding-top: 2px;
  border: 1px solid #eae9ee;
  border-radius: 50%;
  background: #fffffc;
  box-shadow: 0 2px 6px rgba(40, 38, 55, .06);
  color: #25222f;
  font: 400 29px Inter, sans-serif;
}
```
